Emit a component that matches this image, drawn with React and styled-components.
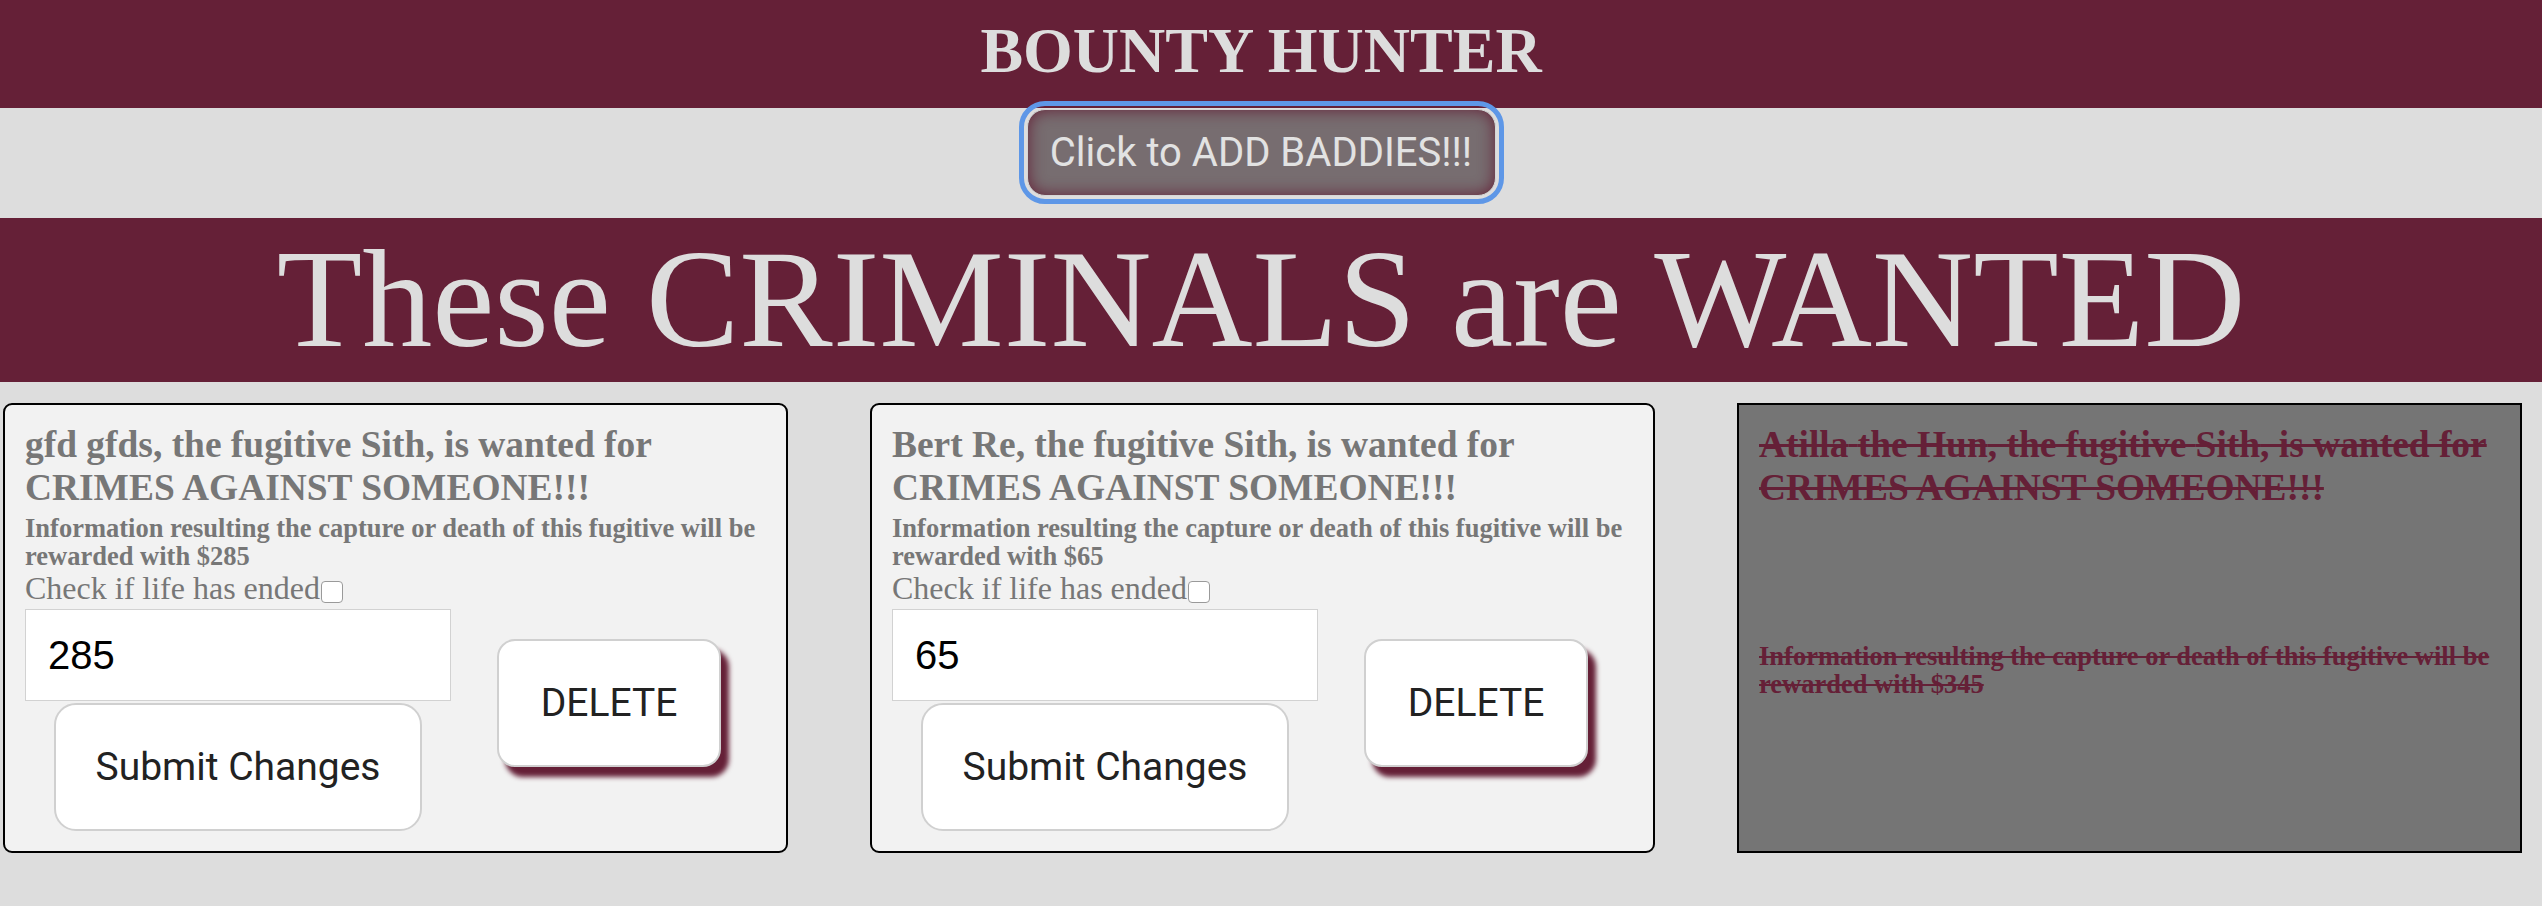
import React from 'react';
import styled, { createGlobalStyle } from 'styled-components';

const GlobalStyle = createGlobalStyle`
  html, body {
    margin: 0;
    padding: 0;
    background: #dddddd;
    font-family: "Liberation Serif", "Times New Roman", serif;
  }
`;

const bounties = [
  { id: 1, first: 'gfd', last: 'gfds', type: 'Sith', amount: 285, living: true },
  { id: 2, first: 'Bert', last: 'Re', type: 'Sith', amount: 65, living: true },
  { id: 3, first: 'Atilla', last: 'the Hun', type: 'Sith', amount: 345, living: false },
];

export default function App() {
  return (
    <Page>
      <GlobalStyle />
      <TopBar>
        <Title>BOUNTY HUNTER</Title>
      </TopBar>

      <AddRow>
        <AddButton>Click to ADD BADDIES!!!</AddButton>
      </AddRow>

      <Banner>
        <BannerText>These CRIMINALS are WANTED</BannerText>
      </Banner>

      <CardRow>
        {bounties.map(b => (
          <Card key={b.id} dead={!b.living}>
            <Name dead={!b.living}>
              {b.first} {b.last}, the fugitive {b.type}, is wanted for CRIMES AGAINST SOMEONE!!!
            </Name>
            <Reward dead={!b.living}>
              Information resulting the capture or death of this fugitive will be rewarded with ${b.amount}
            </Reward>
            {b.living && (
              <>
                <CheckLine>
                  Check if life has ended<Check type="checkbox" />
                </CheckLine>
                <EditRow>
                  <EditColumn>
                    <AmountInput defaultValue={b.amount} />
                    <SubmitButton>Submit Changes</SubmitButton>
                  </EditColumn>
                  <DeleteButton>DELETE</DeleteButton>
                </EditRow>
              </>
            )}
          </Card>
        ))}
      </CardRow>
    </Page>
  );
}

// page wrapper
const Page = styled.div`
  min-height: 906px;
  background: #dddddd;
`;

// header bar
const TopBar = styled.header`
  height: 108px;
  box-sizing: border-box;
  padding: 14px 20px 0 0;
  background: #652037;
  text-align: center;
`;

const Title = styled.h1`
  margin: 0;
  font-size: 64px;
  font-weight: bold;
  color: #dddddd;
`;

// add button strip
const AddRow = styled.div`
  padding: 1px 20px 22px 0;
  text-align: center;
`;

const AddButton = styled.button`
  width: 469px;
  height: 87px;
  border: 1px solid #d6d6d6;
  border-radius: 18px;
  background: #776d70;
  box-shadow: inset 0 0 16px #652037;
  color: #e2e2e2;
  font-family: Roboto, "Liberation Sans", sans-serif;
  font-size: 40px;
  outline: 5px solid #5e97e7;
  outline-offset: 3px;
  cursor: pointer;
`;

// big banner
const Banner = styled.div`
  height: 164px;
  box-sizing: border-box;
  padding: 0 20px 0 0;
  background: #652037;
  text-align: center;
`;

const BannerText = styled.h2`
  margin: 0;
  font-size: 140px;
  font-weight: normal;
  color: #dddddd;
`;

// cards
const CardRow = styled.div`
  display: flex;
  gap: 82px;
  padding: 21px 0 0 3px;
`;

const Card = styled.div`
  width: 785px;
  height: 450px;
  box-sizing: border-box;
  padding: 18px 20px;
  border: 2px solid #000;
  border-radius: ${p => (p.dead ? '0' : '9px')};
  background: ${p => (p.dead ? '#757575' : '#f2f2f2')};
`;

const Name = styled.h3`
  margin: 0;
  font-size: 37.44px;
  line-height: 43px;
  font-weight: bold;
  color: ${p => (p.dead ? '#652037' : '#777777')};
  text-decoration: ${p => (p.dead ? 'line-through' : 'none')};
`;

const Reward = styled.h5`
  margin: ${p => (p.dead ? '133px 0 0' : '5px 0 0')};
  font-size: 26.5px;
  line-height: 28px;
  font-weight: bold;
  color: ${p => (p.dead ? '#652037' : '#777777')};
  text-decoration: ${p => (p.dead ? 'line-through' : 'none')};
`;

const CheckLine = styled.label`
  display: block;
  font-size: 32px;
  line-height: 37px;
  color: #777777;
`;

const Check = styled.input`
  appearance: none;
  width: 22px;
  height: 22px;
  margin: 0 0 0 1px;
  border: 1px solid #9a9a9a;
  border-radius: 4px;
  background: #fff;
  vertical-align: -4px;
`;

const EditRow = styled.div`
  display: flex;
  align-items: flex-start;
  gap: 46px;
  margin-top: 2px;
`;

const EditColumn = styled.div`
  width: 426px;
  display: flex;
  flex-direction: column;
  align-items: center;
  gap: 2px;
`;

const AmountInput = styled.input`
  width: 100%;
  height: 92px;
  box-sizing: border-box;
  padding: 0 22px;
  border: 1px solid #d2d2d2;
  background: #fff;
  color: #000;
  font-family: "Liberation Sans", Arial, sans-serif;
  font-size: 40px;
  outline: none;
`;

const SubmitButton = styled.button`
  width: 368px;
  height: 128px;
  border: 2px solid #d0d0d0;
  border-radius: 22px;
  background: #fff;
  color: #222;
  font-family: Roboto, "Liberation Sans", sans-serif;
  font-size: 39px;
  cursor: pointer;
`;

const DeleteButton = styled.button`
  width: 224px;
  height: 128px;
  margin-top: 30px;
  border: 2px solid #d0d0d0;
  border-radius: 18px;
  background: #fff;
  box-shadow: 8px 10px 5px #652037;
  color: #222;
  font-family: Roboto, "Liberation Sans", sans-serif;
  font-size: 39px;
  cursor: pointer;
`;
